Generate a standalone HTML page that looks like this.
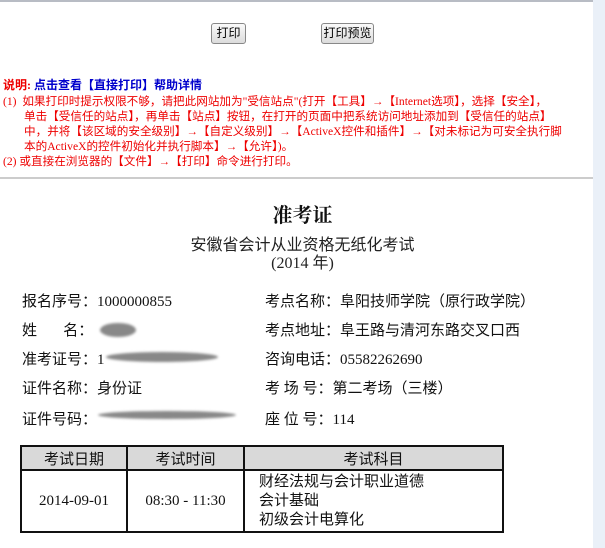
<!DOCTYPE html>
<html><head><meta charset="utf-8"><style>
body{margin:0;width:605px;height:546px;overflow:hidden;background:#eaf0f8;font-family:"Liberation Serif","Noto Sans CJK SC",sans-serif;position:relative}
#pg{position:absolute;left:0;top:0;width:593px;height:546px;background:#fff;border-top:2px solid #b8bcc4}
.btn{position:absolute;top:21px;height:19px;border:1px solid #888;border-radius:3px;background:linear-gradient(#fafafa,#dcdcdc);font:12px "Liberation Sans","Noto Sans CJK SC",sans-serif;text-align:center;line-height:18px;color:#000}
.r{position:absolute;font-size:11.6px;color:#e00;white-space:nowrap;line-height:15px}
.t{position:absolute;font-size:15px;color:#111;white-space:nowrap}
.blur{position:absolute;background:#888;border-radius:50%;filter:blur(1.2px)}
table{position:absolute;left:20px;top:443px;width:484px;border-collapse:collapse;font-size:15px;color:#111}
td{border:2px solid #111;text-align:center;padding:0}
</style></head><body><div id="pg">
<div class="btn" style="left:211px;width:33px">打印</div>
<div class="btn" style="left:321px;width:51px">打印预览</div>
<div class="r" style="left:3px;top:76px;font-weight:bold;font-size:12px">说明: <span style="color:#00c">点击查看【直接打印】帮助详情</span></div>
<div class="r" style="left:3px;top:92px">(1)&nbsp; 如果打印时提示权限不够，请把此网站加为"受信站点"(打开【工具】→【Internet选项】，选择【安全】，</div>
<div class="r" style="left:24px;top:107px">单击【受信任的站点】，再单击【站点】按钮，在打开的页面中把系统访问地址添加到【受信任的站点】</div>
<div class="r" style="left:24px;top:122px">中，并将【该区域的安全级别】→【自定义级别】→【ActiveX控件和插件】→【对未标记为可安全执行脚</div>
<div class="r" style="left:24px;top:137px">本的ActiveX的控件初始化并执行脚本】→【允许】)。</div>
<div class="r" style="left:3px;top:152px">(2) 或直接在浏览器的【文件】→【打印】命令进行打印。</div>
<div style="position:absolute;left:0;top:175px;width:593px;height:2px;background:#ccc"></div>
<div class="t" style="left:0;width:605px;text-align:center;top:197px;font-size:20px;font-weight:bold;font-family:'Liberation Serif','Noto Serif CJK SC',serif">准考证</div>
<div class="t" style="left:0;width:605px;text-align:center;top:229px;font-size:16px;color:#222">安徽省会计从业资格无纸化考试</div>
<div class="t" style="left:0;width:605px;text-align:center;top:247px;font-size:16px;color:#222">(2014 年)</div>
<div class="t" style="left:22px;top:288px">报名序号：1000000855</div>
<div class="t" style="left:22px;top:317px">姓&nbsp;&nbsp;&nbsp;&nbsp;&nbsp;&nbsp;&nbsp;名：</div>
<div class="t" style="left:22px;top:346px">准考证号：1</div>
<div class="t" style="left:22px;top:375px">证件名称：身份证</div>
<div class="t" style="left:22px;top:406px">证件号码：</div>
<div class="blur" style="left:100px;top:321px;width:36px;height:14px"></div>
<div class="blur" style="left:106px;top:350px;width:112px;height:10px"></div>
<div class="blur" style="left:98px;top:409px;width:138px;height:8px"></div>
<div class="t" style="left:265px;top:288px">考点名称：阜阳技师学院（原行政学院）</div>
<div class="t" style="left:265px;top:317px">考点地址：阜王路与清河东路交叉口西</div>
<div class="t" style="left:265px;top:346px">咨询电话：05582262690</div>
<div class="t" style="left:265px;top:375px">考&nbsp;场&nbsp;号：第二考场（三楼）</div>
<div class="t" style="left:265px;top:406px">座&nbsp;位&nbsp;号：114</div>
<table><tr style="height:24px;background:#d9d9d9"><td style="width:104px">考试日期</td><td style="width:115px">考试时间</td><td>考试科目</td></tr>
<tr style="height:62px"><td>2014-09-01</td><td>08:30 - 11:30</td><td style="text-align:left;padding-left:14px;line-height:19px">财经法规与会计职业道德<br>会计基础<br>初级会计电算化</td></tr></table>
</div></body></html>
